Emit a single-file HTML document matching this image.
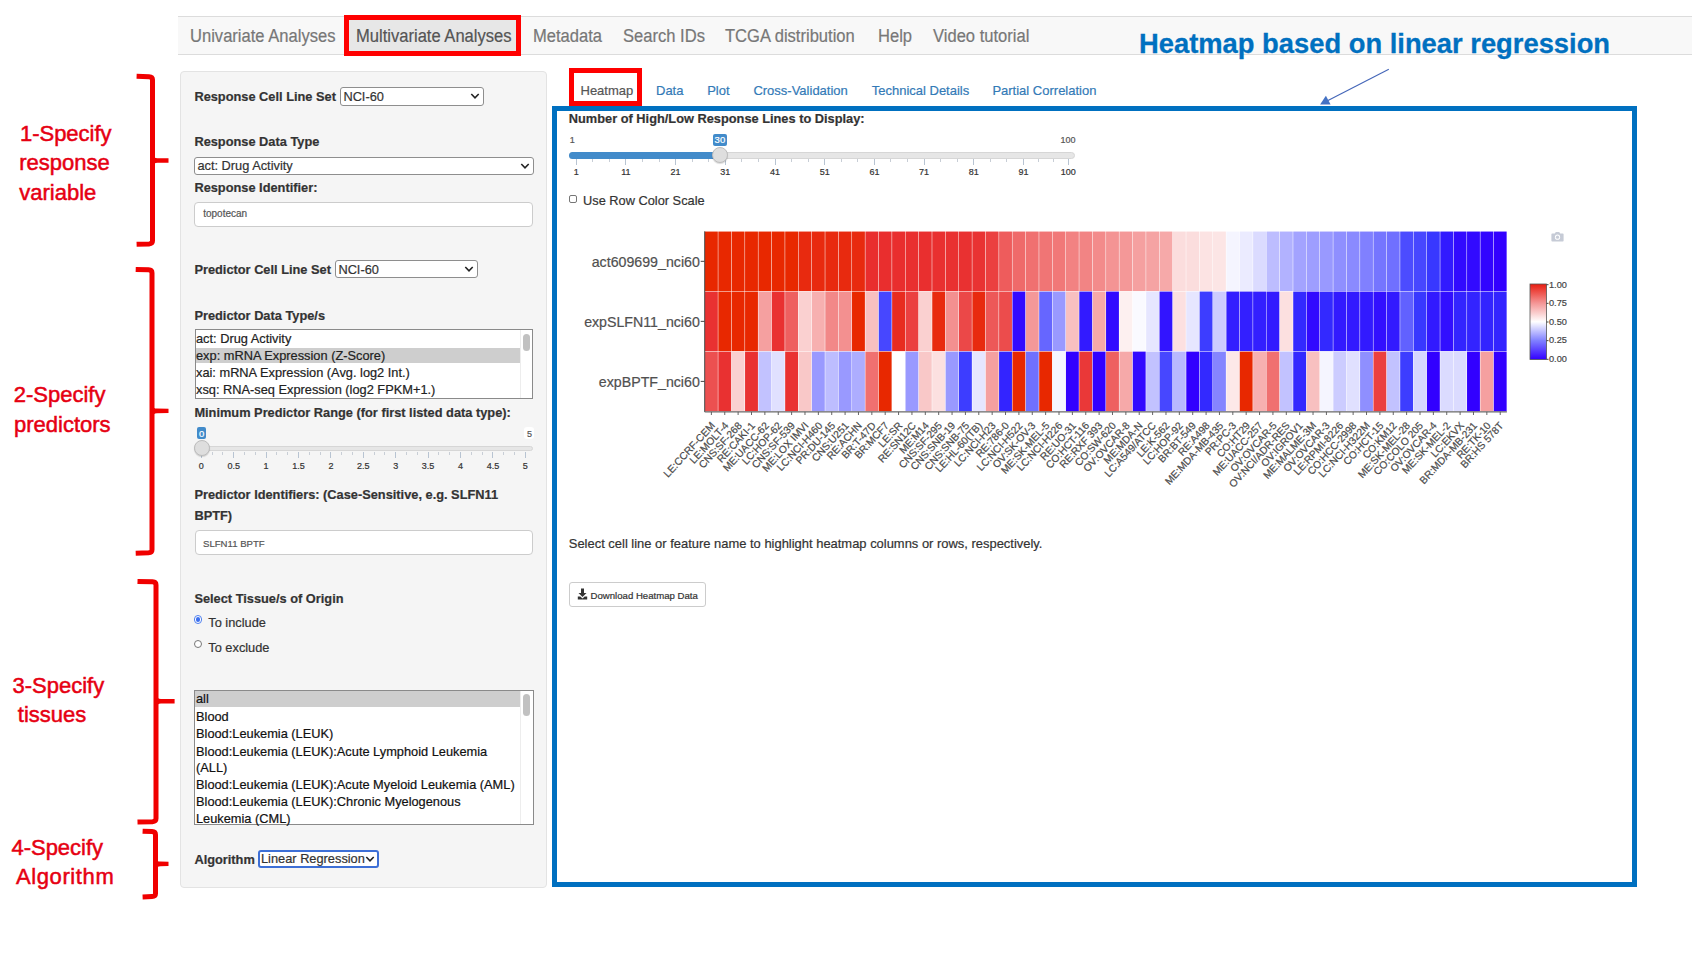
<!DOCTYPE html>
<html><head><meta charset="utf-8"><title>CellMinerCDB Multivariate Analyses</title>
<style>
html,body{margin:0;padding:0;background:#fff;}
body{width:1700px;height:956px;position:relative;overflow:hidden;font-family:"Liberation Sans", sans-serif;}
.t{position:absolute;white-space:nowrap;-webkit-text-stroke:0.2px currentColor;}
</style></head><body>
<div style="position:absolute;left:178.00px;top:16.00px;width:1514.00px;height:39.00px;box-sizing:border-box;background:#F8F8F8;border-top:1px solid #DCDCDC;border-bottom:1px solid #DCDCDC;"></div>
<div style="position:absolute;left:344.00px;top:17.00px;width:177.00px;height:37.00px;box-sizing:border-box;background:#E7E7E7;"></div>
<div class="t" style="left:190.20px;top:25.82px;font-size:18px;line-height:20.682px;color:#777;font-weight:400;transform:scaleX(0.92);transform-origin:left center;">Univariate Analyses</div>
<div class="t" style="left:355.80px;top:25.82px;font-size:18px;line-height:20.682px;color:#555;font-weight:400;transform:scaleX(0.92);transform-origin:left center;">Multivariate Analyses</div>
<div class="t" style="left:532.90px;top:25.82px;font-size:18px;line-height:20.682px;color:#777;font-weight:400;transform:scaleX(0.92);transform-origin:left center;">Metadata</div>
<div class="t" style="left:622.90px;top:25.82px;font-size:18px;line-height:20.682px;color:#777;font-weight:400;transform:scaleX(0.92);transform-origin:left center;">Search IDs</div>
<div class="t" style="left:725.40px;top:25.82px;font-size:18px;line-height:20.682px;color:#777;font-weight:400;transform:scaleX(0.92);transform-origin:left center;">TCGA distribution</div>
<div class="t" style="left:877.80px;top:25.82px;font-size:18px;line-height:20.682px;color:#777;font-weight:400;transform:scaleX(0.92);transform-origin:left center;">Help</div>
<div class="t" style="left:932.90px;top:25.82px;font-size:18px;line-height:20.682px;color:#777;font-weight:400;transform:scaleX(0.92);transform-origin:left center;">Video tutorial</div>
<div style="position:absolute;left:343.80px;top:15.10px;width:177.00px;height:40.80px;box-sizing:border-box;border:5px solid #FF0000;"></div>
<div class="t" style="left:1139.20px;top:26.53px;font-size:28.2px;line-height:32.402px;color:#0070C0;font-weight:700;transform:scaleX(0.97);transform-origin:left center;-webkit-text-stroke:0.3px #0070C0;">Heatmap based on linear regression</div>
<svg style="position:absolute;left:0;top:0" width="1700" height="956"><line x1="1388.8" y1="69.3" x2="1327" y2="100.9" stroke="#4466B8" stroke-width="1.1"/><polygon points="1320.1,104.6 1330.6,104.6 1325.9,95.8" fill="#4472C4"/></svg>
<div class="t" style="left:19.90px;top:121.14px;font-size:22px;line-height:25.278px;color:#E60012;font-weight:400;-webkit-text-stroke:0.5px #E60012;">1-Specify</div>
<div class="t" style="left:19.30px;top:150.44px;font-size:22px;line-height:25.278px;color:#E60012;font-weight:400;-webkit-text-stroke:0.5px #E60012;">response</div>
<div class="t" style="left:19.30px;top:179.74px;font-size:22px;line-height:25.278px;color:#E60012;font-weight:400;-webkit-text-stroke:0.5px #E60012;">variable</div>
<div class="t" style="left:13.70px;top:382.34px;font-size:22px;line-height:25.278px;color:#E60012;font-weight:400;-webkit-text-stroke:0.5px #E60012;">2-Specify</div>
<div class="t" style="left:14.00px;top:412.14px;font-size:22px;line-height:25.278px;color:#E60012;font-weight:400;-webkit-text-stroke:0.5px #E60012;">predictors</div>
<div class="t" style="left:12.50px;top:673.24px;font-size:22px;line-height:25.278px;color:#E60012;font-weight:400;-webkit-text-stroke:0.5px #E60012;">3-Specify</div>
<div class="t" style="left:17.80px;top:701.74px;font-size:22px;line-height:25.278px;color:#E60012;font-weight:400;-webkit-text-stroke:0.5px #E60012;">tissues</div>
<div class="t" style="left:11.40px;top:835.14px;font-size:22px;line-height:25.278px;color:#E60012;font-weight:400;-webkit-text-stroke:0.5px #E60012;">4-Specify</div>
<div class="t" style="left:16.00px;top:863.54px;font-size:22px;line-height:25.278px;color:#E60012;font-weight:400;-webkit-text-stroke:0.5px #E60012;letter-spacing:0.6px;">Algorithm</div>
<svg style="position:absolute;left:0;top:0" width="1700" height="956"><path d="M136.6,76.3 L149.0,76.7 Q152.5,76.89999999999999 152.5,79.8 L152.5,240.8 Q152.5,243.70000000000002 149.0,243.9 L136.6,244.3" fill="none" stroke="#F00000" stroke-width="5.0" stroke-linecap="butt"/><path d="M152.5,155.0 Q153.5,158.0 157.5,158.2 L168.5,158.3 L168.5,162.7 L157.5,162.8 Q153.5,163.0 152.5,166.0 Z" fill="#F00000"/><path d="M135.7,269.4 L148.5,269.79999999999995 Q152.0,270.0 152.0,272.9 L152.0,549.7 Q152.0,552.6 148.5,552.8000000000001 L135.7,553.2" fill="none" stroke="#F00000" stroke-width="5.0" stroke-linecap="butt"/><path d="M152.0,405.4 Q153.0,408.4 157.0,408.59999999999997 L168.5,408.7 L168.5,413.09999999999997 L157.0,413.2 Q153.0,413.4 152.0,416.4 Z" fill="#F00000"/><path d="M137.5,581.4 L152.5,581.8 Q156.0,582.0 156.0,584.9 L156.0,818.6 Q156.0,821.5 152.5,821.7 L137.5,822.1" fill="none" stroke="#F00000" stroke-width="5.0" stroke-linecap="butt"/><path d="M156.0,695.8 Q157.0,698.8 161.0,699.0 L174.6,699.0999999999999 L174.6,703.5 L161.0,703.5999999999999 Q157.0,703.8 156.0,706.8 Z" fill="#F00000"/><path d="M142.6,831.2 L152.0,831.6 Q155.5,831.8000000000001 155.5,834.7 L155.5,893.5 Q155.5,896.4 152.0,896.6 L142.6,897.0" fill="none" stroke="#F00000" stroke-width="5.0" stroke-linecap="butt"/><path d="M155.5,858.4 Q156.5,861.4 160.5,861.6 L168.5,861.6999999999999 L168.5,866.1 L160.5,866.1999999999999 Q156.5,866.4 155.5,869.4 Z" fill="#F00000"/></svg>
<div style="position:absolute;left:179.90px;top:71.20px;width:367.30px;height:816.80px;box-sizing:border-box;background:#F5F5F5;border:1px solid #E3E3E3;border-radius:4px;"></div>
<div class="t" style="left:194.40px;top:90.21px;font-size:12.8px;line-height:14.707px;color:#333;font-weight:700;">Response Cell Line Set</div>
<div style="position:absolute;left:340.20px;top:87.00px;width:143.40px;height:18.60px;box-sizing:border-box;background:#fff;border:1px solid #8E8E8E;border-radius:3px;"></div>
<div class="t" style="left:343.40px;top:89.61px;font-size:12.8px;line-height:14.707px;color:#333;font-weight:400;">NCI-60</div>
<svg style="position:absolute;left:469.6px;top:92.3px" width="10" height="8"><path d="M1.3,2 L5,5.8 L8.7,2" fill="none" stroke="#222" stroke-width="1.6"/></svg>
<div class="t" style="left:194.40px;top:134.91px;font-size:12.8px;line-height:14.707px;color:#333;font-weight:700;">Response Data Type</div>
<div style="position:absolute;left:194.20px;top:156.90px;width:339.40px;height:18.10px;box-sizing:border-box;background:#fff;border:1px solid #8E8E8E;border-radius:3px;"></div>
<div class="t" style="left:197.40px;top:158.81px;font-size:12.8px;line-height:14.707px;color:#333;font-weight:400;">act: Drug Activity</div>
<svg style="position:absolute;left:519.6px;top:161.95px" width="10" height="8"><path d="M1.3,2 L5,5.8 L8.7,2" fill="none" stroke="#222" stroke-width="1.6"/></svg>
<div class="t" style="left:194.40px;top:181.41px;font-size:12.8px;line-height:14.707px;color:#333;font-weight:700;">Response Identifier:</div>
<div style="position:absolute;left:194.30px;top:201.50px;width:339.20px;height:25.00px;box-sizing:border-box;background:#fff;border:1px solid #CCCCCC;border-radius:4px;"></div>
<div class="t" style="left:203.20px;top:208.39px;font-size:10px;line-height:11.490px;color:#555;font-weight:400;">topotecan</div>
<div class="t" style="left:194.40px;top:263.11px;font-size:12.8px;line-height:14.707px;color:#333;font-weight:700;">Predictor Cell Line Set</div>
<div style="position:absolute;left:335.20px;top:260.20px;width:143.20px;height:18.20px;box-sizing:border-box;background:#fff;border:1px solid #8E8E8E;border-radius:3px;"></div>
<div class="t" style="left:338.40px;top:263.21px;font-size:12.8px;line-height:14.707px;color:#333;font-weight:400;">NCI-60</div>
<svg style="position:absolute;left:464.4px;top:265.29999999999995px" width="10" height="8"><path d="M1.3,2 L5,5.8 L8.7,2" fill="none" stroke="#222" stroke-width="1.6"/></svg>
<div class="t" style="left:194.40px;top:308.61px;font-size:12.8px;line-height:14.707px;color:#333;font-weight:700;">Predictor Data Type/s</div>
<div style="position:absolute;left:194.50px;top:329.40px;width:338.90px;height:69.90px;box-sizing:border-box;background:#fff;border:1px solid #8A8A8A;"></div>
<div style="position:absolute;left:195.50px;top:347.80px;width:324.10px;height:15.50px;box-sizing:border-box;background:#CECECE;"></div>
<div style="position:absolute;left:519.60px;top:330.40px;width:1.00px;height:67.90px;box-sizing:border-box;background:#EDEDED;"></div>
<div style="position:absolute;left:522.80px;top:333.70px;width:7.40px;height:17.50px;box-sizing:border-box;background:#C1C1C1;border-radius:4px;"></div>
<div class="t" style="left:196.00px;top:332.41px;font-size:12.8px;line-height:14.707px;color:#222;font-weight:400;">act: Drug Activity</div>
<div class="t" style="left:196.00px;top:349.41px;font-size:12.8px;line-height:14.707px;color:#222;font-weight:400;">exp: mRNA Expression (Z-Score)</div>
<div class="t" style="left:196.00px;top:366.21px;font-size:12.8px;line-height:14.707px;color:#222;font-weight:400;">xai: mRNA Expression (Avg. log2 Int.)</div>
<div class="t" style="left:196.00px;top:383.21px;font-size:12.8px;line-height:14.707px;color:#222;font-weight:400;">xsq: RNA-seq Expression (log2 FPKM+1.)</div>
<div class="t" style="left:194.40px;top:406.01px;font-size:12.8px;line-height:14.707px;color:#333;font-weight:700;">Minimum Predictor Range (for first listed data type):</div>
<div style="position:absolute;left:524.30px;top:427.20px;width:9.30px;height:12.00px;box-sizing:border-box;background:#FFFFFF;border-radius:3px;"></div>
<div style="position:absolute;left:194.00px;top:445.60px;width:339.40px;height:5.80px;box-sizing:border-box;background:#E6E6E6;border:1px solid #D6D6D6;border-radius:4px;"></div>
<div style="position:absolute;left:200.80px;top:451.60px;width:1.00px;height:6.00px;box-sizing:border-box;background:#B8C4D2;"></div>
<div style="position:absolute;left:233.20px;top:451.60px;width:1.00px;height:6.00px;box-sizing:border-box;background:#B8C4D2;"></div>
<div style="position:absolute;left:265.60px;top:451.60px;width:1.00px;height:6.00px;box-sizing:border-box;background:#B8C4D2;"></div>
<div style="position:absolute;left:298.00px;top:451.60px;width:1.00px;height:6.00px;box-sizing:border-box;background:#B8C4D2;"></div>
<div style="position:absolute;left:330.40px;top:451.60px;width:1.00px;height:6.00px;box-sizing:border-box;background:#B8C4D2;"></div>
<div style="position:absolute;left:362.80px;top:451.60px;width:1.00px;height:6.00px;box-sizing:border-box;background:#B8C4D2;"></div>
<div style="position:absolute;left:395.20px;top:451.60px;width:1.00px;height:6.00px;box-sizing:border-box;background:#B8C4D2;"></div>
<div style="position:absolute;left:427.60px;top:451.60px;width:1.00px;height:6.00px;box-sizing:border-box;background:#B8C4D2;"></div>
<div style="position:absolute;left:460.00px;top:451.60px;width:1.00px;height:6.00px;box-sizing:border-box;background:#B8C4D2;"></div>
<div style="position:absolute;left:492.40px;top:451.60px;width:1.00px;height:6.00px;box-sizing:border-box;background:#B8C4D2;"></div>
<div style="position:absolute;left:524.80px;top:451.60px;width:1.00px;height:6.00px;box-sizing:border-box;background:#B8C4D2;"></div>
<div style="position:absolute;left:211.60px;top:451.60px;width:1.00px;height:3.50px;box-sizing:border-box;background:#C8CED6;"></div>
<div style="position:absolute;left:222.40px;top:451.60px;width:1.00px;height:3.50px;box-sizing:border-box;background:#C8CED6;"></div>
<div style="position:absolute;left:244.00px;top:451.60px;width:1.00px;height:3.50px;box-sizing:border-box;background:#C8CED6;"></div>
<div style="position:absolute;left:254.80px;top:451.60px;width:1.00px;height:3.50px;box-sizing:border-box;background:#C8CED6;"></div>
<div style="position:absolute;left:276.40px;top:451.60px;width:1.00px;height:3.50px;box-sizing:border-box;background:#C8CED6;"></div>
<div style="position:absolute;left:287.20px;top:451.60px;width:1.00px;height:3.50px;box-sizing:border-box;background:#C8CED6;"></div>
<div style="position:absolute;left:308.80px;top:451.60px;width:1.00px;height:3.50px;box-sizing:border-box;background:#C8CED6;"></div>
<div style="position:absolute;left:319.60px;top:451.60px;width:1.00px;height:3.50px;box-sizing:border-box;background:#C8CED6;"></div>
<div style="position:absolute;left:341.20px;top:451.60px;width:1.00px;height:3.50px;box-sizing:border-box;background:#C8CED6;"></div>
<div style="position:absolute;left:352.00px;top:451.60px;width:1.00px;height:3.50px;box-sizing:border-box;background:#C8CED6;"></div>
<div style="position:absolute;left:373.60px;top:451.60px;width:1.00px;height:3.50px;box-sizing:border-box;background:#C8CED6;"></div>
<div style="position:absolute;left:384.40px;top:451.60px;width:1.00px;height:3.50px;box-sizing:border-box;background:#C8CED6;"></div>
<div style="position:absolute;left:406.00px;top:451.60px;width:1.00px;height:3.50px;box-sizing:border-box;background:#C8CED6;"></div>
<div style="position:absolute;left:416.80px;top:451.60px;width:1.00px;height:3.50px;box-sizing:border-box;background:#C8CED6;"></div>
<div style="position:absolute;left:438.40px;top:451.60px;width:1.00px;height:3.50px;box-sizing:border-box;background:#C8CED6;"></div>
<div style="position:absolute;left:449.20px;top:451.60px;width:1.00px;height:3.50px;box-sizing:border-box;background:#C8CED6;"></div>
<div style="position:absolute;left:470.80px;top:451.60px;width:1.00px;height:3.50px;box-sizing:border-box;background:#C8CED6;"></div>
<div style="position:absolute;left:481.60px;top:451.60px;width:1.00px;height:3.50px;box-sizing:border-box;background:#C8CED6;"></div>
<div style="position:absolute;left:503.20px;top:451.60px;width:1.00px;height:3.50px;box-sizing:border-box;background:#C8CED6;"></div>
<div style="position:absolute;left:514.00px;top:451.60px;width:1.00px;height:3.50px;box-sizing:border-box;background:#C8CED6;"></div>
<div class="t" style="left:181.30px;width:40px;text-align:center;top:460.71px;font-size:9px;line-height:10.34px;color:#333">0</div>
<div class="t" style="left:213.70px;width:40px;text-align:center;top:460.71px;font-size:9px;line-height:10.34px;color:#333">0.5</div>
<div class="t" style="left:246.10px;width:40px;text-align:center;top:460.71px;font-size:9px;line-height:10.34px;color:#333">1</div>
<div class="t" style="left:278.50px;width:40px;text-align:center;top:460.71px;font-size:9px;line-height:10.34px;color:#333">1.5</div>
<div class="t" style="left:310.90px;width:40px;text-align:center;top:460.71px;font-size:9px;line-height:10.34px;color:#333">2</div>
<div class="t" style="left:343.30px;width:40px;text-align:center;top:460.71px;font-size:9px;line-height:10.34px;color:#333">2.5</div>
<div class="t" style="left:375.70px;width:40px;text-align:center;top:460.71px;font-size:9px;line-height:10.34px;color:#333">3</div>
<div class="t" style="left:408.10px;width:40px;text-align:center;top:460.71px;font-size:9px;line-height:10.34px;color:#333">3.5</div>
<div class="t" style="left:440.50px;width:40px;text-align:center;top:460.71px;font-size:9px;line-height:10.34px;color:#333">4</div>
<div class="t" style="left:472.90px;width:40px;text-align:center;top:460.71px;font-size:9px;line-height:10.34px;color:#333">4.5</div>
<div class="t" style="left:505.30px;width:40px;text-align:center;top:460.71px;font-size:9px;line-height:10.34px;color:#333">5</div>
<div class="t" style="left:0.00px;top:-8.30px;font-size:9px;line-height:10.34px;color:#555;"></div>
<div class="t" style="left:526.90px;top:429.30px;font-size:9px;line-height:10.34px;color:#555;">5</div>
<div style="position:absolute;left:197.30px;top:427.30px;width:8.50px;height:11.40px;box-sizing:border-box;background:#428BCA;border-radius:2px;"></div>
<div class="t" style="left:197.30px;width:8.50px;text-align:center;top:427.90px;font-size:9.5px;line-height:11.40px;color:#fff">0</div>
<div style="position:absolute;left:193.60px;top:439.90px;width:16px;height:16px;box-sizing:border-box;border-radius:50%;background:#DEDEDE;border:1px solid #BDBDBD;box-shadow:0 1px 1px rgba(0,0,0,.15)"></div>
<div class="t" style="left:194.40px;top:488.41px;font-size:12.8px;line-height:14.707px;color:#333;font-weight:700;">Predictor Identifiers: (Case-Sensitive, e.g. SLFN11</div>
<div class="t" style="left:194.40px;top:508.51px;font-size:12.8px;line-height:14.707px;color:#333;font-weight:700;">BPTF)</div>
<div style="position:absolute;left:194.50px;top:530.40px;width:338.90px;height:24.40px;box-sizing:border-box;background:#fff;border:1px solid #CCCCCC;border-radius:4px;"></div>
<div class="t" style="left:203.00px;top:537.76px;font-size:9.6px;line-height:11.030px;color:#555;font-weight:400;">SLFN11 BPTF</div>
<div class="t" style="left:194.40px;top:592.41px;font-size:12.8px;line-height:14.707px;color:#333;font-weight:700;">Select Tissue/s of Origin</div>
<div style="position:absolute;left:193.6px;top:615.3px;width:8.4px;height:8.4px;box-sizing:border-box;border-radius:50%;background:#fff;border:1.3px solid #4F80EE;"></div>
<div style="position:absolute;left:195.75px;top:617.45px;width:4.1px;height:4.1px;border-radius:50%;background:#3C6FEF;"></div>
<div style="position:absolute;left:193.7px;top:640.2px;width:8px;height:8px;box-sizing:border-box;border-radius:50%;background:#fff;border:1px solid #777;"></div>
<div class="t" style="left:208.30px;top:616.21px;font-size:12.8px;line-height:14.707px;color:#333;font-weight:400;">To include</div>
<div class="t" style="left:208.30px;top:641.11px;font-size:12.8px;line-height:14.707px;color:#333;font-weight:400;">To exclude</div>
<div style="position:absolute;left:194.20px;top:689.70px;width:339.60px;height:135.80px;box-sizing:border-box;background:#fff;border:1px solid #8A8A8A;"></div>
<div style="position:absolute;left:195.20px;top:690.70px;width:324.40px;height:16.40px;box-sizing:border-box;background:#CECECE;"></div>
<div style="position:absolute;left:519.60px;top:690.70px;width:1.00px;height:133.80px;box-sizing:border-box;background:#EDEDED;"></div>
<div style="position:absolute;left:522.80px;top:694.30px;width:7.40px;height:21.40px;box-sizing:border-box;background:#C1C1C1;border-radius:4px;"></div>
<div class="t" style="left:196.00px;top:692.21px;font-size:12.8px;line-height:14.707px;color:#111;font-weight:400;">all</div>
<div class="t" style="left:196.00px;top:710.21px;font-size:12.8px;line-height:14.707px;color:#111;font-weight:400;">Blood</div>
<div class="t" style="left:196.00px;top:727.41px;font-size:12.8px;line-height:14.707px;color:#111;font-weight:400;">Blood:Leukemia (LEUK)</div>
<div class="t" style="left:196.00px;top:745.21px;font-size:12.8px;line-height:14.707px;color:#111;font-weight:400;">Blood:Leukemia (LEUK):Acute Lymphoid Leukemia</div>
<div class="t" style="left:196.00px;top:761.21px;font-size:12.8px;line-height:14.707px;color:#111;font-weight:400;">(ALL)</div>
<div class="t" style="left:196.00px;top:777.91px;font-size:12.8px;line-height:14.707px;color:#111;font-weight:400;">Blood:Leukemia (LEUK):Acute Myeloid Leukemia (AML)</div>
<div class="t" style="left:196.00px;top:795.21px;font-size:12.8px;line-height:14.707px;color:#111;font-weight:400;">Blood:Leukemia (LEUK):Chronic Myelogenous</div>
<div class="t" style="left:196.00px;top:811.91px;font-size:12.8px;line-height:14.707px;color:#111;font-weight:400;">Leukemia (CML)</div>
<div class="t" style="left:194.40px;top:852.91px;font-size:12.8px;line-height:14.707px;color:#333;font-weight:700;">Algorithm</div>
<div style="position:absolute;left:258.20px;top:850.30px;width:120.60px;height:17.30px;box-sizing:border-box;background:#fff;border:2px solid #3D6FD6;border-radius:3px;"></div>
<div class="t" style="left:261.00px;top:852.01px;font-size:12.8px;line-height:14.707px;color:#333;font-weight:400;">Linear Regression</div>
<svg style="position:absolute;left:364.8px;top:854.95px" width="10" height="8"><path d="M1.3,2 L5,5.8 L8.7,2" fill="none" stroke="#222" stroke-width="1.6"/></svg>
<div class="t" style="left:580.50px;top:83.93px;font-size:13px;line-height:14.937px;color:#555;font-weight:400;">Heatmap</div>
<div class="t" style="left:656.00px;top:83.93px;font-size:13px;line-height:14.937px;color:#337AB7;font-weight:400;">Data</div>
<div class="t" style="left:707.20px;top:83.93px;font-size:13px;line-height:14.937px;color:#337AB7;font-weight:400;">Plot</div>
<div class="t" style="left:753.40px;top:83.93px;font-size:13px;line-height:14.937px;color:#337AB7;font-weight:400;">Cross-Validation</div>
<div class="t" style="left:871.70px;top:83.93px;font-size:13px;line-height:14.937px;color:#337AB7;font-weight:400;">Technical Details</div>
<div class="t" style="left:992.40px;top:83.93px;font-size:13px;line-height:14.937px;color:#337AB7;font-weight:400;">Partial Correlation</div>
<div style="position:absolute;left:569.20px;top:68.00px;width:72.60px;height:37.90px;box-sizing:border-box;border:5px solid #FF0000;"></div>
<div style="position:absolute;left:551.90px;top:106.00px;width:1084.90px;height:780.80px;box-sizing:border-box;border:5px solid #0070C0;"></div>
<div class="t" style="left:568.80px;top:112.21px;font-size:12.8px;line-height:14.707px;color:#333;font-weight:700;">Number of High/Low Response Lines to Display:</div>
<div style="position:absolute;left:568.80px;top:152.40px;width:506.60px;height:6.60px;box-sizing:border-box;background:#E6E6E6;border:1px solid #D6D6D6;border-radius:4px;"></div>
<div style="position:absolute;left:568.80px;top:152.40px;width:151.20px;height:6.60px;box-sizing:border-box;background:#428BCA;border-radius:4px 0 0 4px;"></div>
<div style="position:absolute;left:575.70px;top:158.80px;width:1.00px;height:6.00px;box-sizing:border-box;background:#B8C4D2;"></div>
<div style="position:absolute;left:625.40px;top:158.80px;width:1.00px;height:6.00px;box-sizing:border-box;background:#B8C4D2;"></div>
<div style="position:absolute;left:675.10px;top:158.80px;width:1.00px;height:6.00px;box-sizing:border-box;background:#B8C4D2;"></div>
<div style="position:absolute;left:724.80px;top:158.80px;width:1.00px;height:6.00px;box-sizing:border-box;background:#B8C4D2;"></div>
<div style="position:absolute;left:774.50px;top:158.80px;width:1.00px;height:6.00px;box-sizing:border-box;background:#B8C4D2;"></div>
<div style="position:absolute;left:824.20px;top:158.80px;width:1.00px;height:6.00px;box-sizing:border-box;background:#B8C4D2;"></div>
<div style="position:absolute;left:873.90px;top:158.80px;width:1.00px;height:6.00px;box-sizing:border-box;background:#B8C4D2;"></div>
<div style="position:absolute;left:923.60px;top:158.80px;width:1.00px;height:6.00px;box-sizing:border-box;background:#B8C4D2;"></div>
<div style="position:absolute;left:973.30px;top:158.80px;width:1.00px;height:6.00px;box-sizing:border-box;background:#B8C4D2;"></div>
<div style="position:absolute;left:1023.00px;top:158.80px;width:1.00px;height:6.00px;box-sizing:border-box;background:#B8C4D2;"></div>
<div style="position:absolute;left:1067.73px;top:158.80px;width:1.00px;height:6.00px;box-sizing:border-box;background:#B8C4D2;"></div>
<div style="position:absolute;left:592.27px;top:158.80px;width:1.00px;height:3.50px;box-sizing:border-box;background:#C8CED6;"></div>
<div style="position:absolute;left:608.83px;top:158.80px;width:1.00px;height:3.50px;box-sizing:border-box;background:#C8CED6;"></div>
<div style="position:absolute;left:641.97px;top:158.80px;width:1.00px;height:3.50px;box-sizing:border-box;background:#C8CED6;"></div>
<div style="position:absolute;left:658.53px;top:158.80px;width:1.00px;height:3.50px;box-sizing:border-box;background:#C8CED6;"></div>
<div style="position:absolute;left:691.67px;top:158.80px;width:1.00px;height:3.50px;box-sizing:border-box;background:#C8CED6;"></div>
<div style="position:absolute;left:708.23px;top:158.80px;width:1.00px;height:3.50px;box-sizing:border-box;background:#C8CED6;"></div>
<div style="position:absolute;left:741.37px;top:158.80px;width:1.00px;height:3.50px;box-sizing:border-box;background:#C8CED6;"></div>
<div style="position:absolute;left:757.93px;top:158.80px;width:1.00px;height:3.50px;box-sizing:border-box;background:#C8CED6;"></div>
<div style="position:absolute;left:791.07px;top:158.80px;width:1.00px;height:3.50px;box-sizing:border-box;background:#C8CED6;"></div>
<div style="position:absolute;left:807.63px;top:158.80px;width:1.00px;height:3.50px;box-sizing:border-box;background:#C8CED6;"></div>
<div style="position:absolute;left:840.77px;top:158.80px;width:1.00px;height:3.50px;box-sizing:border-box;background:#C8CED6;"></div>
<div style="position:absolute;left:857.33px;top:158.80px;width:1.00px;height:3.50px;box-sizing:border-box;background:#C8CED6;"></div>
<div style="position:absolute;left:890.47px;top:158.80px;width:1.00px;height:3.50px;box-sizing:border-box;background:#C8CED6;"></div>
<div style="position:absolute;left:907.03px;top:158.80px;width:1.00px;height:3.50px;box-sizing:border-box;background:#C8CED6;"></div>
<div style="position:absolute;left:940.17px;top:158.80px;width:1.00px;height:3.50px;box-sizing:border-box;background:#C8CED6;"></div>
<div style="position:absolute;left:956.73px;top:158.80px;width:1.00px;height:3.50px;box-sizing:border-box;background:#C8CED6;"></div>
<div style="position:absolute;left:989.87px;top:158.80px;width:1.00px;height:3.50px;box-sizing:border-box;background:#C8CED6;"></div>
<div style="position:absolute;left:1006.43px;top:158.80px;width:1.00px;height:3.50px;box-sizing:border-box;background:#C8CED6;"></div>
<div style="position:absolute;left:1037.91px;top:158.80px;width:1.00px;height:3.50px;box-sizing:border-box;background:#C8CED6;"></div>
<div style="position:absolute;left:1052.82px;top:158.80px;width:1.00px;height:3.50px;box-sizing:border-box;background:#C8CED6;"></div>
<div class="t" style="left:556.20px;width:40px;text-align:center;top:166.91px;font-size:9px;line-height:10.34px;color:#333">1</div>
<div class="t" style="left:605.90px;width:40px;text-align:center;top:166.91px;font-size:9px;line-height:10.34px;color:#333">11</div>
<div class="t" style="left:655.60px;width:40px;text-align:center;top:166.91px;font-size:9px;line-height:10.34px;color:#333">21</div>
<div class="t" style="left:705.30px;width:40px;text-align:center;top:166.91px;font-size:9px;line-height:10.34px;color:#333">31</div>
<div class="t" style="left:755.00px;width:40px;text-align:center;top:166.91px;font-size:9px;line-height:10.34px;color:#333">41</div>
<div class="t" style="left:804.70px;width:40px;text-align:center;top:166.91px;font-size:9px;line-height:10.34px;color:#333">51</div>
<div class="t" style="left:854.40px;width:40px;text-align:center;top:166.91px;font-size:9px;line-height:10.34px;color:#333">61</div>
<div class="t" style="left:904.10px;width:40px;text-align:center;top:166.91px;font-size:9px;line-height:10.34px;color:#333">71</div>
<div class="t" style="left:953.80px;width:40px;text-align:center;top:166.91px;font-size:9px;line-height:10.34px;color:#333">81</div>
<div class="t" style="left:1003.50px;width:40px;text-align:center;top:166.91px;font-size:9px;line-height:10.34px;color:#333">91</div>
<div class="t" style="left:1048.23px;width:40px;text-align:center;top:166.91px;font-size:9px;line-height:10.34px;color:#333">100</div>
<div class="t" style="left:569.80px;top:135.10px;font-size:9px;line-height:10.34px;color:#555;">1</div>
<div class="t" style="left:1060.50px;top:135.10px;font-size:9px;line-height:10.34px;color:#555;">100</div>
<div style="position:absolute;left:713.00px;top:133.50px;width:13.80px;height:12.70px;box-sizing:border-box;background:#428BCA;border-radius:2px;"></div>
<div class="t" style="left:713.00px;width:13.80px;text-align:center;top:134.10px;font-size:9.5px;line-height:12.70px;color:#fff">30</div>
<div style="position:absolute;left:711.80px;top:146.70px;width:16px;height:16px;box-sizing:border-box;border-radius:50%;background:#DEDEDE;border:1px solid #BDBDBD;box-shadow:0 1px 1px rgba(0,0,0,.15)"></div>
<div style="position:absolute;left:569.20px;top:195.00px;width:7.80px;height:8.00px;box-sizing:border-box;background:#fff;border:1px solid #767676;border-radius:2px;"></div>
<div class="t" style="left:583.00px;top:193.81px;font-size:12.8px;line-height:14.707px;color:#333;font-weight:400;">Use Row Color Scale</div>
<svg style="position:absolute;left:0;top:0" width="1700" height="956"><rect x="704.95" y="231.55" width="12.87" height="59.53" fill="#E82800"/><rect x="718.32" y="231.55" width="12.87" height="59.53" fill="#E82800"/><rect x="731.69" y="231.55" width="12.87" height="59.53" fill="#E82800"/><rect x="745.06" y="231.55" width="12.87" height="59.53" fill="#E82800"/><rect x="758.43" y="231.55" width="12.87" height="59.53" fill="#E82800"/><rect x="771.80" y="231.55" width="12.87" height="59.53" fill="#E82800"/><rect x="785.17" y="231.55" width="12.87" height="59.53" fill="#E82800"/><rect x="798.54" y="231.55" width="12.87" height="59.53" fill="#E82A0F"/><rect x="811.91" y="231.55" width="12.87" height="59.53" fill="#E82A0F"/><rect x="825.28" y="231.55" width="12.87" height="59.53" fill="#E82A0F"/><rect x="838.65" y="231.55" width="12.87" height="59.53" fill="#E82A0F"/><rect x="852.02" y="231.55" width="12.87" height="59.53" fill="#E82A0F"/><rect x="865.39" y="231.55" width="12.87" height="59.53" fill="#E92E2E"/><rect x="878.76" y="231.55" width="12.87" height="59.53" fill="#E92E2E"/><rect x="892.13" y="231.55" width="12.87" height="59.53" fill="#E92E2E"/><rect x="905.50" y="231.55" width="12.87" height="59.53" fill="#E92F2F"/><rect x="918.87" y="231.55" width="12.87" height="59.53" fill="#E92F2F"/><rect x="932.24" y="231.55" width="12.87" height="59.53" fill="#E93030"/><rect x="945.61" y="231.55" width="12.87" height="59.53" fill="#E93131"/><rect x="958.98" y="231.55" width="12.87" height="59.53" fill="#E93131"/><rect x="972.35" y="231.55" width="12.87" height="59.53" fill="#E93333"/><rect x="985.72" y="231.55" width="12.87" height="59.53" fill="#EB4040"/><rect x="999.09" y="231.55" width="12.87" height="59.53" fill="#EE5C5C"/><rect x="1012.46" y="231.55" width="12.87" height="59.53" fill="#EF6A6A"/><rect x="1025.83" y="231.55" width="12.87" height="59.53" fill="#F07070"/><rect x="1039.20" y="231.55" width="12.87" height="59.53" fill="#F07575"/><rect x="1052.57" y="231.55" width="12.87" height="59.53" fill="#F17878"/><rect x="1065.94" y="231.55" width="12.87" height="59.53" fill="#F28282"/><rect x="1079.31" y="231.55" width="12.87" height="59.53" fill="#F28484"/><rect x="1092.68" y="231.55" width="12.87" height="59.53" fill="#F38B8B"/><rect x="1106.05" y="231.55" width="12.87" height="59.53" fill="#F49494"/><rect x="1119.42" y="231.55" width="12.87" height="59.53" fill="#F49898"/><rect x="1132.79" y="231.55" width="12.87" height="59.53" fill="#F5A0A0"/><rect x="1146.16" y="231.55" width="12.87" height="59.53" fill="#F5A3A3"/><rect x="1159.53" y="231.55" width="12.87" height="59.53" fill="#F6A9A9"/><rect x="1172.90" y="231.55" width="12.87" height="59.53" fill="#FBDDDD"/><rect x="1186.27" y="231.55" width="12.87" height="59.53" fill="#FBDDDD"/><rect x="1199.64" y="231.55" width="12.87" height="59.53" fill="#FCE3E3"/><rect x="1213.01" y="231.55" width="12.87" height="59.53" fill="#FCE5E5"/><rect x="1226.38" y="231.55" width="12.87" height="59.53" fill="#F5F5FF"/><rect x="1239.75" y="231.55" width="12.87" height="59.53" fill="#EBEBFF"/><rect x="1253.12" y="231.55" width="12.87" height="59.53" fill="#DBDBFF"/><rect x="1266.49" y="231.55" width="12.87" height="59.53" fill="#BDBDFF"/><rect x="1279.86" y="231.55" width="12.87" height="59.53" fill="#B2B2FF"/><rect x="1293.23" y="231.55" width="12.87" height="59.53" fill="#A3A3FF"/><rect x="1306.60" y="231.55" width="12.87" height="59.53" fill="#9E9EFF"/><rect x="1319.97" y="231.55" width="12.87" height="59.53" fill="#9999FF"/><rect x="1333.34" y="231.55" width="12.87" height="59.53" fill="#8F8FFF"/><rect x="1346.71" y="231.55" width="12.87" height="59.53" fill="#8A8AFF"/><rect x="1360.08" y="231.55" width="12.87" height="59.53" fill="#8080FF"/><rect x="1373.45" y="231.55" width="12.87" height="59.53" fill="#7575FF"/><rect x="1386.82" y="231.55" width="12.87" height="59.53" fill="#7070FF"/><rect x="1400.19" y="231.55" width="12.87" height="59.53" fill="#4C4CFF"/><rect x="1413.56" y="231.55" width="12.87" height="59.53" fill="#4747FF"/><rect x="1426.93" y="231.55" width="12.87" height="59.53" fill="#3838FF"/><rect x="1440.30" y="231.55" width="12.87" height="59.53" fill="#321AFF"/><rect x="1453.67" y="231.55" width="12.87" height="59.53" fill="#320AFF"/><rect x="1467.04" y="231.55" width="12.87" height="59.53" fill="#320AFF"/><rect x="1480.41" y="231.55" width="12.87" height="59.53" fill="#3205FF"/><rect x="1493.78" y="231.55" width="12.87" height="59.53" fill="#3200FF"/><rect x="704.95" y="291.58" width="12.87" height="59.53" fill="#E93131"/><rect x="718.32" y="291.58" width="12.87" height="59.53" fill="#E82800"/><rect x="731.69" y="291.58" width="12.87" height="59.53" fill="#E82800"/><rect x="745.06" y="291.58" width="12.87" height="59.53" fill="#E82800"/><rect x="758.43" y="291.58" width="12.87" height="59.53" fill="#F5A0A0"/><rect x="771.80" y="291.58" width="12.87" height="59.53" fill="#E93131"/><rect x="785.17" y="291.58" width="12.87" height="59.53" fill="#EE6060"/><rect x="798.54" y="291.58" width="12.87" height="59.53" fill="#FAD0D0"/><rect x="811.91" y="291.58" width="12.87" height="59.53" fill="#F7B0B0"/><rect x="825.28" y="291.58" width="12.87" height="59.53" fill="#F28888"/><rect x="838.65" y="291.58" width="12.87" height="59.53" fill="#F39090"/><rect x="852.02" y="291.58" width="12.87" height="59.53" fill="#E82800"/><rect x="865.39" y="291.58" width="12.87" height="59.53" fill="#F8C0C0"/><rect x="878.76" y="291.58" width="12.87" height="59.53" fill="#4747FF"/><rect x="892.13" y="291.58" width="12.87" height="59.53" fill="#E82C1F"/><rect x="905.50" y="291.58" width="12.87" height="59.53" fill="#EB4040"/><rect x="918.87" y="291.58" width="12.87" height="59.53" fill="#FAD0D0"/><rect x="932.24" y="291.58" width="12.87" height="59.53" fill="#E82A0F"/><rect x="945.61" y="291.58" width="12.87" height="59.53" fill="#F39090"/><rect x="958.98" y="291.58" width="12.87" height="59.53" fill="#EB4848"/><rect x="972.35" y="291.58" width="12.87" height="59.53" fill="#E82A0F"/><rect x="985.72" y="291.58" width="12.87" height="59.53" fill="#ED5858"/><rect x="999.09" y="291.58" width="12.87" height="59.53" fill="#EC4C4C"/><rect x="1012.46" y="291.58" width="12.87" height="59.53" fill="#320AFF"/><rect x="1025.83" y="291.58" width="12.87" height="59.53" fill="#F49898"/><rect x="1039.20" y="291.58" width="12.87" height="59.53" fill="#6666FF"/><rect x="1052.57" y="291.58" width="12.87" height="59.53" fill="#9999FF"/><rect x="1065.94" y="291.58" width="12.87" height="59.53" fill="#F8C0C0"/><rect x="1079.31" y="291.58" width="12.87" height="59.53" fill="#321AFF"/><rect x="1092.68" y="291.58" width="12.87" height="59.53" fill="#F6A9A9"/><rect x="1106.05" y="291.58" width="12.87" height="59.53" fill="#320AFF"/><rect x="1119.42" y="291.58" width="12.87" height="59.53" fill="#FDF0F0"/><rect x="1132.79" y="291.58" width="12.87" height="59.53" fill="#FAFAFF"/><rect x="1146.16" y="291.58" width="12.87" height="59.53" fill="#E6E6FF"/><rect x="1159.53" y="291.58" width="12.87" height="59.53" fill="#3214FF"/><rect x="1172.90" y="291.58" width="12.87" height="59.53" fill="#FCE0E0"/><rect x="1186.27" y="291.58" width="12.87" height="59.53" fill="#E6E6FF"/><rect x="1199.64" y="291.58" width="12.87" height="59.53" fill="#3D3DFF"/><rect x="1213.01" y="291.58" width="12.87" height="59.53" fill="#CCCCFF"/><rect x="1226.38" y="291.58" width="12.87" height="59.53" fill="#331FFF"/><rect x="1239.75" y="291.58" width="12.87" height="59.53" fill="#331FFF"/><rect x="1253.12" y="291.58" width="12.87" height="59.53" fill="#331FFF"/><rect x="1266.49" y="291.58" width="12.87" height="59.53" fill="#321AFF"/><rect x="1279.86" y="291.58" width="12.87" height="59.53" fill="#FCE0E0"/><rect x="1293.23" y="291.58" width="12.87" height="59.53" fill="#3329FF"/><rect x="1306.60" y="291.58" width="12.87" height="59.53" fill="#320AFF"/><rect x="1319.97" y="291.58" width="12.87" height="59.53" fill="#3329FF"/><rect x="1333.34" y="291.58" width="12.87" height="59.53" fill="#321AFF"/><rect x="1346.71" y="291.58" width="12.87" height="59.53" fill="#321AFF"/><rect x="1360.08" y="291.58" width="12.87" height="59.53" fill="#321AFF"/><rect x="1373.45" y="291.58" width="12.87" height="59.53" fill="#320FFF"/><rect x="1386.82" y="291.58" width="12.87" height="59.53" fill="#321AFF"/><rect x="1400.19" y="291.58" width="12.87" height="59.53" fill="#6161FF"/><rect x="1413.56" y="291.58" width="12.87" height="59.53" fill="#3838FF"/><rect x="1426.93" y="291.58" width="12.87" height="59.53" fill="#321AFF"/><rect x="1440.30" y="291.58" width="12.87" height="59.53" fill="#320FFF"/><rect x="1453.67" y="291.58" width="12.87" height="59.53" fill="#3324FF"/><rect x="1467.04" y="291.58" width="12.87" height="59.53" fill="#3324FF"/><rect x="1480.41" y="291.58" width="12.87" height="59.53" fill="#3324FF"/><rect x="1493.78" y="291.58" width="12.87" height="59.53" fill="#3324FF"/><rect x="704.95" y="351.62" width="12.87" height="59.53" fill="#EC5050"/><rect x="718.32" y="351.62" width="12.87" height="59.53" fill="#E93131"/><rect x="731.69" y="351.62" width="12.87" height="59.53" fill="#FAD0D0"/><rect x="745.06" y="351.62" width="12.87" height="59.53" fill="#E93131"/><rect x="758.43" y="351.62" width="12.87" height="59.53" fill="#C2C2FF"/><rect x="771.80" y="351.62" width="12.87" height="59.53" fill="#E0E0FF"/><rect x="785.17" y="351.62" width="12.87" height="59.53" fill="#E93131"/><rect x="798.54" y="351.62" width="12.87" height="59.53" fill="#F9C8C8"/><rect x="811.91" y="351.62" width="12.87" height="59.53" fill="#9999FF"/><rect x="825.28" y="351.62" width="12.87" height="59.53" fill="#BDBDFF"/><rect x="838.65" y="351.62" width="12.87" height="59.53" fill="#9999FF"/><rect x="852.02" y="351.62" width="12.87" height="59.53" fill="#ADADFF"/><rect x="865.39" y="351.62" width="12.87" height="59.53" fill="#F07070"/><rect x="878.76" y="351.62" width="12.87" height="59.53" fill="#E82800"/><rect x="892.13" y="351.62" width="12.87" height="59.53" fill="#FFFFFF"/><rect x="905.50" y="351.62" width="12.87" height="59.53" fill="#9999FF"/><rect x="918.87" y="351.62" width="12.87" height="59.53" fill="#F9C8C8"/><rect x="932.24" y="351.62" width="12.87" height="59.53" fill="#FCE0E0"/><rect x="945.61" y="351.62" width="12.87" height="59.53" fill="#9999FF"/><rect x="958.98" y="351.62" width="12.87" height="59.53" fill="#3D3DFF"/><rect x="972.35" y="351.62" width="12.87" height="59.53" fill="#E6E6FF"/><rect x="985.72" y="351.62" width="12.87" height="59.53" fill="#F5A0A0"/><rect x="999.09" y="351.62" width="12.87" height="59.53" fill="#3324FF"/><rect x="1012.46" y="351.62" width="12.87" height="59.53" fill="#E82800"/><rect x="1025.83" y="351.62" width="12.87" height="59.53" fill="#7070FF"/><rect x="1039.20" y="351.62" width="12.87" height="59.53" fill="#E82800"/><rect x="1052.57" y="351.62" width="12.87" height="59.53" fill="#F5F5FF"/><rect x="1065.94" y="351.62" width="12.87" height="59.53" fill="#3200FF"/><rect x="1079.31" y="351.62" width="12.87" height="59.53" fill="#EA3838"/><rect x="1092.68" y="351.62" width="12.87" height="59.53" fill="#3200FF"/><rect x="1106.05" y="351.62" width="12.87" height="59.53" fill="#EE6060"/><rect x="1119.42" y="351.62" width="12.87" height="59.53" fill="#F6A9A9"/><rect x="1132.79" y="351.62" width="12.87" height="59.53" fill="#320AFF"/><rect x="1146.16" y="351.62" width="12.87" height="59.53" fill="#C2C2FF"/><rect x="1159.53" y="351.62" width="12.87" height="59.53" fill="#4747FF"/><rect x="1172.90" y="351.62" width="12.87" height="59.53" fill="#B8B8FF"/><rect x="1186.27" y="351.62" width="12.87" height="59.53" fill="#3200FF"/><rect x="1199.64" y="351.62" width="12.87" height="59.53" fill="#3329FF"/><rect x="1213.01" y="351.62" width="12.87" height="59.53" fill="#8585FF"/><rect x="1226.38" y="351.62" width="12.87" height="59.53" fill="#FDE8E8"/><rect x="1239.75" y="351.62" width="12.87" height="59.53" fill="#E82800"/><rect x="1253.12" y="351.62" width="12.87" height="59.53" fill="#F7B0B0"/><rect x="1266.49" y="351.62" width="12.87" height="59.53" fill="#F07070"/><rect x="1279.86" y="351.62" width="12.87" height="59.53" fill="#C2C2FF"/><rect x="1293.23" y="351.62" width="12.87" height="59.53" fill="#3329FF"/><rect x="1306.60" y="351.62" width="12.87" height="59.53" fill="#F8C0C0"/><rect x="1319.97" y="351.62" width="12.87" height="59.53" fill="#F5F5FF"/><rect x="1333.34" y="351.62" width="12.87" height="59.53" fill="#CCCCFF"/><rect x="1346.71" y="351.62" width="12.87" height="59.53" fill="#E0E0FF"/><rect x="1360.08" y="351.62" width="12.87" height="59.53" fill="#8F8FFF"/><rect x="1373.45" y="351.62" width="12.87" height="59.53" fill="#EB4040"/><rect x="1386.82" y="351.62" width="12.87" height="59.53" fill="#C2C2FF"/><rect x="1400.19" y="351.62" width="12.87" height="59.53" fill="#3D3DFF"/><rect x="1413.56" y="351.62" width="12.87" height="59.53" fill="#D6D6FF"/><rect x="1426.93" y="351.62" width="12.87" height="59.53" fill="#3200FF"/><rect x="1440.30" y="351.62" width="12.87" height="59.53" fill="#DBDBFF"/><rect x="1453.67" y="351.62" width="12.87" height="59.53" fill="#DBDBFF"/><rect x="1467.04" y="351.62" width="12.87" height="59.53" fill="#3200FF"/><rect x="1480.41" y="351.62" width="12.87" height="59.53" fill="#F5A0A0"/><rect x="1493.78" y="351.62" width="12.87" height="59.53" fill="#3200FF"/><line x1="704.7" y1="231.3" x2="704.7" y2="411.9" stroke="#444" stroke-width="1"/><line x1="704.7" y1="411.9" x2="1506.9" y2="411.9" stroke="#444" stroke-width="1"/><line x1="711.38" y1="411.9" x2="711.38" y2="415.0" stroke="#555" stroke-width="0.9"/><line x1="724.75" y1="411.9" x2="724.75" y2="415.0" stroke="#555" stroke-width="0.9"/><line x1="738.12" y1="411.9" x2="738.12" y2="415.0" stroke="#555" stroke-width="0.9"/><line x1="751.50" y1="411.9" x2="751.50" y2="415.0" stroke="#555" stroke-width="0.9"/><line x1="764.87" y1="411.9" x2="764.87" y2="415.0" stroke="#555" stroke-width="0.9"/><line x1="778.24" y1="411.9" x2="778.24" y2="415.0" stroke="#555" stroke-width="0.9"/><line x1="791.61" y1="411.9" x2="791.61" y2="415.0" stroke="#555" stroke-width="0.9"/><line x1="804.98" y1="411.9" x2="804.98" y2="415.0" stroke="#555" stroke-width="0.9"/><line x1="818.35" y1="411.9" x2="818.35" y2="415.0" stroke="#555" stroke-width="0.9"/><line x1="831.72" y1="411.9" x2="831.72" y2="415.0" stroke="#555" stroke-width="0.9"/><line x1="845.09" y1="411.9" x2="845.09" y2="415.0" stroke="#555" stroke-width="0.9"/><line x1="858.46" y1="411.9" x2="858.46" y2="415.0" stroke="#555" stroke-width="0.9"/><line x1="871.83" y1="411.9" x2="871.83" y2="415.0" stroke="#555" stroke-width="0.9"/><line x1="885.20" y1="411.9" x2="885.20" y2="415.0" stroke="#555" stroke-width="0.9"/><line x1="898.57" y1="411.9" x2="898.57" y2="415.0" stroke="#555" stroke-width="0.9"/><line x1="911.94" y1="411.9" x2="911.94" y2="415.0" stroke="#555" stroke-width="0.9"/><line x1="925.31" y1="411.9" x2="925.31" y2="415.0" stroke="#555" stroke-width="0.9"/><line x1="938.68" y1="411.9" x2="938.68" y2="415.0" stroke="#555" stroke-width="0.9"/><line x1="952.05" y1="411.9" x2="952.05" y2="415.0" stroke="#555" stroke-width="0.9"/><line x1="965.42" y1="411.9" x2="965.42" y2="415.0" stroke="#555" stroke-width="0.9"/><line x1="978.79" y1="411.9" x2="978.79" y2="415.0" stroke="#555" stroke-width="0.9"/><line x1="992.16" y1="411.9" x2="992.16" y2="415.0" stroke="#555" stroke-width="0.9"/><line x1="1005.53" y1="411.9" x2="1005.53" y2="415.0" stroke="#555" stroke-width="0.9"/><line x1="1018.90" y1="411.9" x2="1018.90" y2="415.0" stroke="#555" stroke-width="0.9"/><line x1="1032.27" y1="411.9" x2="1032.27" y2="415.0" stroke="#555" stroke-width="0.9"/><line x1="1045.63" y1="411.9" x2="1045.63" y2="415.0" stroke="#555" stroke-width="0.9"/><line x1="1059.01" y1="411.9" x2="1059.01" y2="415.0" stroke="#555" stroke-width="0.9"/><line x1="1072.38" y1="411.9" x2="1072.38" y2="415.0" stroke="#555" stroke-width="0.9"/><line x1="1085.75" y1="411.9" x2="1085.75" y2="415.0" stroke="#555" stroke-width="0.9"/><line x1="1099.12" y1="411.9" x2="1099.12" y2="415.0" stroke="#555" stroke-width="0.9"/><line x1="1112.49" y1="411.9" x2="1112.49" y2="415.0" stroke="#555" stroke-width="0.9"/><line x1="1125.86" y1="411.9" x2="1125.86" y2="415.0" stroke="#555" stroke-width="0.9"/><line x1="1139.23" y1="411.9" x2="1139.23" y2="415.0" stroke="#555" stroke-width="0.9"/><line x1="1152.60" y1="411.9" x2="1152.60" y2="415.0" stroke="#555" stroke-width="0.9"/><line x1="1165.97" y1="411.9" x2="1165.97" y2="415.0" stroke="#555" stroke-width="0.9"/><line x1="1179.34" y1="411.9" x2="1179.34" y2="415.0" stroke="#555" stroke-width="0.9"/><line x1="1192.71" y1="411.9" x2="1192.71" y2="415.0" stroke="#555" stroke-width="0.9"/><line x1="1206.08" y1="411.9" x2="1206.08" y2="415.0" stroke="#555" stroke-width="0.9"/><line x1="1219.45" y1="411.9" x2="1219.45" y2="415.0" stroke="#555" stroke-width="0.9"/><line x1="1232.82" y1="411.9" x2="1232.82" y2="415.0" stroke="#555" stroke-width="0.9"/><line x1="1246.18" y1="411.9" x2="1246.18" y2="415.0" stroke="#555" stroke-width="0.9"/><line x1="1259.56" y1="411.9" x2="1259.56" y2="415.0" stroke="#555" stroke-width="0.9"/><line x1="1272.93" y1="411.9" x2="1272.93" y2="415.0" stroke="#555" stroke-width="0.9"/><line x1="1286.30" y1="411.9" x2="1286.30" y2="415.0" stroke="#555" stroke-width="0.9"/><line x1="1299.66" y1="411.9" x2="1299.66" y2="415.0" stroke="#555" stroke-width="0.9"/><line x1="1313.04" y1="411.9" x2="1313.04" y2="415.0" stroke="#555" stroke-width="0.9"/><line x1="1326.41" y1="411.9" x2="1326.41" y2="415.0" stroke="#555" stroke-width="0.9"/><line x1="1339.78" y1="411.9" x2="1339.78" y2="415.0" stroke="#555" stroke-width="0.9"/><line x1="1353.14" y1="411.9" x2="1353.14" y2="415.0" stroke="#555" stroke-width="0.9"/><line x1="1366.52" y1="411.9" x2="1366.52" y2="415.0" stroke="#555" stroke-width="0.9"/><line x1="1379.89" y1="411.9" x2="1379.89" y2="415.0" stroke="#555" stroke-width="0.9"/><line x1="1393.26" y1="411.9" x2="1393.26" y2="415.0" stroke="#555" stroke-width="0.9"/><line x1="1406.62" y1="411.9" x2="1406.62" y2="415.0" stroke="#555" stroke-width="0.9"/><line x1="1420.00" y1="411.9" x2="1420.00" y2="415.0" stroke="#555" stroke-width="0.9"/><line x1="1433.37" y1="411.9" x2="1433.37" y2="415.0" stroke="#555" stroke-width="0.9"/><line x1="1446.74" y1="411.9" x2="1446.74" y2="415.0" stroke="#555" stroke-width="0.9"/><line x1="1460.11" y1="411.9" x2="1460.11" y2="415.0" stroke="#555" stroke-width="0.9"/><line x1="1473.48" y1="411.9" x2="1473.48" y2="415.0" stroke="#555" stroke-width="0.9"/><line x1="1486.85" y1="411.9" x2="1486.85" y2="415.0" stroke="#555" stroke-width="0.9"/><line x1="1500.22" y1="411.9" x2="1500.22" y2="415.0" stroke="#555" stroke-width="0.9"/><line x1="700.7" y1="261.32" x2="704.7" y2="261.32" stroke="#444" stroke-width="1"/><line x1="700.7" y1="321.35" x2="704.7" y2="321.35" stroke="#444" stroke-width="1"/><line x1="700.7" y1="381.38" x2="704.7" y2="381.38" stroke="#444" stroke-width="1"/><defs><linearGradient id="cb" x1="0" y1="1" x2="0" y2="0"><stop offset="0" stop-color="#3200FF"/><stop offset="0.25" stop-color="#8080FF"/><stop offset="0.5" stop-color="#FFFFFF"/><stop offset="0.75" stop-color="#F49494"/><stop offset="1" stop-color="#E81C10"/></linearGradient></defs><rect x="1530" y="284" width="16.5" height="75.5" fill="url(#cb)" stroke="#555" stroke-width="0.8"/><line x1="1546.5" y1="359.30" x2="1548.5" y2="359.30" stroke="#444" stroke-width="1"/><line x1="1546.5" y1="340.65" x2="1548.5" y2="340.65" stroke="#444" stroke-width="1"/><line x1="1546.5" y1="322.00" x2="1548.5" y2="322.00" stroke="#444" stroke-width="1"/><line x1="1546.5" y1="303.35" x2="1548.5" y2="303.35" stroke="#444" stroke-width="1"/><line x1="1546.5" y1="284.70" x2="1548.5" y2="284.70" stroke="#444" stroke-width="1"/></svg>
<div class="t" style="left:1549.00px;top:354.13px;font-size:9.2px;line-height:10.571px;color:#444;font-weight:400;">0.00</div>
<div class="t" style="left:1549.00px;top:335.48px;font-size:9.2px;line-height:10.571px;color:#444;font-weight:400;">0.25</div>
<div class="t" style="left:1549.00px;top:316.83px;font-size:9.2px;line-height:10.571px;color:#444;font-weight:400;">0.50</div>
<div class="t" style="left:1549.00px;top:298.18px;font-size:9.2px;line-height:10.571px;color:#444;font-weight:400;">0.75</div>
<div class="t" style="left:1549.00px;top:279.53px;font-size:9.2px;line-height:10.571px;color:#444;font-weight:400;">1.00</div>
<div class="t" style="right:1000.20px;text-align:right;top:254.24px;font-size:14.2px;line-height:16.316px;color:#505050;font-weight:400;">act609699_nci60</div>
<div class="t" style="right:1000.20px;text-align:right;top:314.27px;font-size:14.2px;line-height:16.316px;color:#505050;font-weight:400;">expSLFN11_nci60</div>
<div class="t" style="right:1000.20px;text-align:right;top:374.31px;font-size:14.2px;line-height:16.316px;color:#505050;font-weight:400;">expBPTF_nci60</div>
<div class="t" style="right:986.62px;top:418.00px;font-size:10.3px;line-height:12px;color:#4a4a4a;transform:rotate(-47.5deg);transform-origin:100% 50%;">LE:CCRF-CEM</div>
<div class="t" style="right:973.25px;top:418.00px;font-size:10.3px;line-height:12px;color:#4a4a4a;transform:rotate(-47.5deg);transform-origin:100% 50%;">LE:MOLT-4</div>
<div class="t" style="right:959.88px;top:418.00px;font-size:10.3px;line-height:12px;color:#4a4a4a;transform:rotate(-47.5deg);transform-origin:100% 50%;">CNS:SF-268</div>
<div class="t" style="right:946.50px;top:418.00px;font-size:10.3px;line-height:12px;color:#4a4a4a;transform:rotate(-47.5deg);transform-origin:100% 50%;">RE:CAKI-1</div>
<div class="t" style="right:933.13px;top:418.00px;font-size:10.3px;line-height:12px;color:#4a4a4a;transform:rotate(-47.5deg);transform-origin:100% 50%;">ME:UACC-62</div>
<div class="t" style="right:919.76px;top:418.00px;font-size:10.3px;line-height:12px;color:#4a4a4a;transform:rotate(-47.5deg);transform-origin:100% 50%;">LC:HOP-62</div>
<div class="t" style="right:906.39px;top:418.00px;font-size:10.3px;line-height:12px;color:#4a4a4a;transform:rotate(-47.5deg);transform-origin:100% 50%;">CNS:SF-539</div>
<div class="t" style="right:893.02px;top:418.00px;font-size:10.3px;line-height:12px;color:#4a4a4a;transform:rotate(-47.5deg);transform-origin:100% 50%;">ME:LOX IMVI</div>
<div class="t" style="right:879.65px;top:418.00px;font-size:10.3px;line-height:12px;color:#4a4a4a;transform:rotate(-47.5deg);transform-origin:100% 50%;">LC:NCI-H460</div>
<div class="t" style="right:866.28px;top:418.00px;font-size:10.3px;line-height:12px;color:#4a4a4a;transform:rotate(-47.5deg);transform-origin:100% 50%;">PR:DU-145</div>
<div class="t" style="right:852.91px;top:418.00px;font-size:10.3px;line-height:12px;color:#4a4a4a;transform:rotate(-47.5deg);transform-origin:100% 50%;">CNS:U251</div>
<div class="t" style="right:839.54px;top:418.00px;font-size:10.3px;line-height:12px;color:#4a4a4a;transform:rotate(-47.5deg);transform-origin:100% 50%;">RE:ACHN</div>
<div class="t" style="right:826.17px;top:418.00px;font-size:10.3px;line-height:12px;color:#4a4a4a;transform:rotate(-47.5deg);transform-origin:100% 50%;">BR:T-47D</div>
<div class="t" style="right:812.80px;top:418.00px;font-size:10.3px;line-height:12px;color:#4a4a4a;transform:rotate(-47.5deg);transform-origin:100% 50%;">BR:MCF7</div>
<div class="t" style="right:799.43px;top:418.00px;font-size:10.3px;line-height:12px;color:#4a4a4a;transform:rotate(-47.5deg);transform-origin:100% 50%;">LE:SR</div>
<div class="t" style="right:786.06px;top:418.00px;font-size:10.3px;line-height:12px;color:#4a4a4a;transform:rotate(-47.5deg);transform-origin:100% 50%;">RE:SN12C</div>
<div class="t" style="right:772.69px;top:418.00px;font-size:10.3px;line-height:12px;color:#4a4a4a;transform:rotate(-47.5deg);transform-origin:100% 50%;">ME:M14</div>
<div class="t" style="right:759.32px;top:418.00px;font-size:10.3px;line-height:12px;color:#4a4a4a;transform:rotate(-47.5deg);transform-origin:100% 50%;">CNS:SF-295</div>
<div class="t" style="right:745.95px;top:418.00px;font-size:10.3px;line-height:12px;color:#4a4a4a;transform:rotate(-47.5deg);transform-origin:100% 50%;">CNS:SNB-19</div>
<div class="t" style="right:732.58px;top:418.00px;font-size:10.3px;line-height:12px;color:#4a4a4a;transform:rotate(-47.5deg);transform-origin:100% 50%;">CNS:SNB-75</div>
<div class="t" style="right:719.21px;top:418.00px;font-size:10.3px;line-height:12px;color:#4a4a4a;transform:rotate(-47.5deg);transform-origin:100% 50%;">LE:HL-60(TB)</div>
<div class="t" style="right:705.84px;top:418.00px;font-size:10.3px;line-height:12px;color:#4a4a4a;transform:rotate(-47.5deg);transform-origin:100% 50%;">LC:NCI-H23</div>
<div class="t" style="right:692.47px;top:418.00px;font-size:10.3px;line-height:12px;color:#4a4a4a;transform:rotate(-47.5deg);transform-origin:100% 50%;">RE:786-0</div>
<div class="t" style="right:679.10px;top:418.00px;font-size:10.3px;line-height:12px;color:#4a4a4a;transform:rotate(-47.5deg);transform-origin:100% 50%;">LC:NCI-H522</div>
<div class="t" style="right:665.73px;top:418.00px;font-size:10.3px;line-height:12px;color:#4a4a4a;transform:rotate(-47.5deg);transform-origin:100% 50%;">OV:SK-OV-3</div>
<div class="t" style="right:652.37px;top:418.00px;font-size:10.3px;line-height:12px;color:#4a4a4a;transform:rotate(-47.5deg);transform-origin:100% 50%;">ME:SK-MEL-5</div>
<div class="t" style="right:638.99px;top:418.00px;font-size:10.3px;line-height:12px;color:#4a4a4a;transform:rotate(-47.5deg);transform-origin:100% 50%;">LC:NCI-H226</div>
<div class="t" style="right:625.62px;top:418.00px;font-size:10.3px;line-height:12px;color:#4a4a4a;transform:rotate(-47.5deg);transform-origin:100% 50%;">RE:UO-31</div>
<div class="t" style="right:612.25px;top:418.00px;font-size:10.3px;line-height:12px;color:#4a4a4a;transform:rotate(-47.5deg);transform-origin:100% 50%;">CO:HCT-116</div>
<div class="t" style="right:598.88px;top:418.00px;font-size:10.3px;line-height:12px;color:#4a4a4a;transform:rotate(-47.5deg);transform-origin:100% 50%;">RE:RXF 393</div>
<div class="t" style="right:585.51px;top:418.00px;font-size:10.3px;line-height:12px;color:#4a4a4a;transform:rotate(-47.5deg);transform-origin:100% 50%;">CO:SW-620</div>
<div class="t" style="right:572.14px;top:418.00px;font-size:10.3px;line-height:12px;color:#4a4a4a;transform:rotate(-47.5deg);transform-origin:100% 50%;">OV:OVCAR-8</div>
<div class="t" style="right:558.77px;top:418.00px;font-size:10.3px;line-height:12px;color:#4a4a4a;transform:rotate(-47.5deg);transform-origin:100% 50%;">ME:MDA-N</div>
<div class="t" style="right:545.40px;top:418.00px;font-size:10.3px;line-height:12px;color:#4a4a4a;transform:rotate(-47.5deg);transform-origin:100% 50%;">LC:A549/ATCC</div>
<div class="t" style="right:532.03px;top:418.00px;font-size:10.3px;line-height:12px;color:#4a4a4a;transform:rotate(-47.5deg);transform-origin:100% 50%;">LE:K-562</div>
<div class="t" style="right:518.66px;top:418.00px;font-size:10.3px;line-height:12px;color:#4a4a4a;transform:rotate(-47.5deg);transform-origin:100% 50%;">LC:HOP-92</div>
<div class="t" style="right:505.29px;top:418.00px;font-size:10.3px;line-height:12px;color:#4a4a4a;transform:rotate(-47.5deg);transform-origin:100% 50%;">BR:BT-549</div>
<div class="t" style="right:491.92px;top:418.00px;font-size:10.3px;line-height:12px;color:#4a4a4a;transform:rotate(-47.5deg);transform-origin:100% 50%;">RE:A498</div>
<div class="t" style="right:478.55px;top:418.00px;font-size:10.3px;line-height:12px;color:#4a4a4a;transform:rotate(-47.5deg);transform-origin:100% 50%;">ME:MDA-MB-435</div>
<div class="t" style="right:465.18px;top:418.00px;font-size:10.3px;line-height:12px;color:#4a4a4a;transform:rotate(-47.5deg);transform-origin:100% 50%;">PR:PC-3</div>
<div class="t" style="right:451.82px;top:418.00px;font-size:10.3px;line-height:12px;color:#4a4a4a;transform:rotate(-47.5deg);transform-origin:100% 50%;">CO:HT29</div>
<div class="t" style="right:438.44px;top:418.00px;font-size:10.3px;line-height:12px;color:#4a4a4a;transform:rotate(-47.5deg);transform-origin:100% 50%;">ME:UACC-257</div>
<div class="t" style="right:425.07px;top:418.00px;font-size:10.3px;line-height:12px;color:#4a4a4a;transform:rotate(-47.5deg);transform-origin:100% 50%;">OV:OVCAR-5</div>
<div class="t" style="right:411.70px;top:418.00px;font-size:10.3px;line-height:12px;color:#4a4a4a;transform:rotate(-47.5deg);transform-origin:100% 50%;">OV:NCI/ADR-RES</div>
<div class="t" style="right:398.34px;top:418.00px;font-size:10.3px;line-height:12px;color:#4a4a4a;transform:rotate(-47.5deg);transform-origin:100% 50%;">OV:IGROV1</div>
<div class="t" style="right:384.96px;top:418.00px;font-size:10.3px;line-height:12px;color:#4a4a4a;transform:rotate(-47.5deg);transform-origin:100% 50%;">ME:MALME-3M</div>
<div class="t" style="right:371.59px;top:418.00px;font-size:10.3px;line-height:12px;color:#4a4a4a;transform:rotate(-47.5deg);transform-origin:100% 50%;">OV:OVCAR-3</div>
<div class="t" style="right:358.22px;top:418.00px;font-size:10.3px;line-height:12px;color:#4a4a4a;transform:rotate(-47.5deg);transform-origin:100% 50%;">LE:RPMI-8226</div>
<div class="t" style="right:344.86px;top:418.00px;font-size:10.3px;line-height:12px;color:#4a4a4a;transform:rotate(-47.5deg);transform-origin:100% 50%;">CO:HCC-2998</div>
<div class="t" style="right:331.48px;top:418.00px;font-size:10.3px;line-height:12px;color:#4a4a4a;transform:rotate(-47.5deg);transform-origin:100% 50%;">LC:NCI-H322M</div>
<div class="t" style="right:318.11px;top:418.00px;font-size:10.3px;line-height:12px;color:#4a4a4a;transform:rotate(-47.5deg);transform-origin:100% 50%;">CO:HCT-15</div>
<div class="t" style="right:304.74px;top:418.00px;font-size:10.3px;line-height:12px;color:#4a4a4a;transform:rotate(-47.5deg);transform-origin:100% 50%;">CO:KM12</div>
<div class="t" style="right:291.38px;top:418.00px;font-size:10.3px;line-height:12px;color:#4a4a4a;transform:rotate(-47.5deg);transform-origin:100% 50%;">ME:SK-MEL-28</div>
<div class="t" style="right:278.00px;top:418.00px;font-size:10.3px;line-height:12px;color:#4a4a4a;transform:rotate(-47.5deg);transform-origin:100% 50%;">CO:COLO 205</div>
<div class="t" style="right:264.63px;top:418.00px;font-size:10.3px;line-height:12px;color:#4a4a4a;transform:rotate(-47.5deg);transform-origin:100% 50%;">OV:OVCAR-4</div>
<div class="t" style="right:251.26px;top:418.00px;font-size:10.3px;line-height:12px;color:#4a4a4a;transform:rotate(-47.5deg);transform-origin:100% 50%;">ME:SK-MEL-2</div>
<div class="t" style="right:237.89px;top:418.00px;font-size:10.3px;line-height:12px;color:#4a4a4a;transform:rotate(-47.5deg);transform-origin:100% 50%;">LC:EKVX</div>
<div class="t" style="right:224.52px;top:418.00px;font-size:10.3px;line-height:12px;color:#4a4a4a;transform:rotate(-47.5deg);transform-origin:100% 50%;">BR:MDA-MB-231</div>
<div class="t" style="right:211.15px;top:418.00px;font-size:10.3px;line-height:12px;color:#4a4a4a;transform:rotate(-47.5deg);transform-origin:100% 50%;">RE:TK-10</div>
<div class="t" style="right:197.78px;top:418.00px;font-size:10.3px;line-height:12px;color:#4a4a4a;transform:rotate(-47.5deg);transform-origin:100% 50%;">BR:HS 578T</div>
<svg style="position:absolute;left:1550.5px;top:231px" width="13" height="11" viewBox="0 0 13 11"><path d="M1.2,2.5 h2.6 l1,-1.6 h3.4 l1,1.6 h2.6 a0.8,0.8 0 0 1 0.8,0.8 v6.4 a0.8,0.8 0 0 1 -0.8,0.8 h-10.6 a0.8,0.8 0 0 1 -0.8,-0.8 v-6.4 a0.8,0.8 0 0 1 0.8,-0.8z" fill="#C6CBD6"/><circle cx="6.5" cy="6.2" r="2.6" fill="#fff"/><circle cx="6.5" cy="6.2" r="1.6" fill="#C6CBD6"/></svg>
<div class="t" style="left:568.80px;top:536.57px;font-size:12.95px;line-height:14.880px;color:#333;font-weight:400;">Select cell line or feature name to highlight heatmap columns or rows, respectively.</div>
<div style="position:absolute;left:569.40px;top:581.50px;width:137.10px;height:25.90px;box-sizing:border-box;background:#fff;border:1px solid #CCCCCC;border-radius:3px;"></div>
<svg style="position:absolute;left:577px;top:588px" width="11" height="12" viewBox="0 0 11 12"><path d="M4,0.5 h3 v4.5 h2.5 l-4,4 l-4,-4 h2.5z" fill="#333"/><path d="M0.8,8.5 h2.5 l2.2,2 l2.2,-2 h2.5 v3 h-9.4z" fill="#333"/></svg>
<div class="t" style="left:590.60px;top:589.66px;font-size:9.6px;line-height:11.030px;color:#333;font-weight:400;">Download Heatmap Data</div>
</body></html>
